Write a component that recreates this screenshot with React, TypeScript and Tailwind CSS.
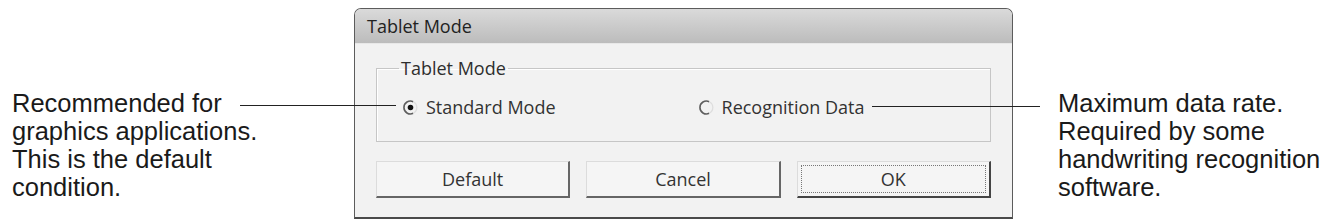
import React from "react";

const uiFont = { fontFamily: '"Open Sans", "Noto Sans", sans-serif' };

function Radio({ checked }: { checked?: boolean }) {
  return (
    <svg width="15" height="15" viewBox="0 0 14 14" className="shrink-0">
      <path d="M9.5 1.6 A6 6 0 1 0 9.5 12.4" fill="none" stroke="#5f5f5f" strokeWidth="1.5" />
      <path d="M9.5 1.6 A6 6 0 0 1 9.5 12.4" fill="none" stroke="#dedede" strokeWidth="1.2" />
      {checked && <circle cx="7" cy="7" r="2.6" fill="#111" />}
    </svg>
  );
}

function Btn({ label, focused }: { label: string; focused?: boolean }) {
  return (
    <div
      className={`flex h-[37px] w-[195px] items-center justify-center bg-[#f5f5f5] text-[18px] text-[#333] border-t border-l border-t-[#dcdcdc] border-l-[#dcdcdc] border-r-2 border-b-2 ${
        focused ? "border-r-[#444] border-b-[#444] p-[3px]" : "border-r-[#666] border-b-[#666]"
      }`}
    >
      {focused ? (
        <div className="flex h-full w-full items-center justify-center border border-dotted border-[#777]">{label}</div>
      ) : (
        label
      )}
    </div>
  );
}

export default function App() {
  return (
    <div
      className="relative flex h-[223px] w-[1329px] items-start bg-white text-[#1a1a1a]"
      style={{ fontFamily: '"Liberation Sans", Arial, sans-serif' }}
    >
      {/* left note */}
      <div className="w-[354px] shrink-0 pl-[12px] pt-[89px] text-[25.5px] leading-[28px]">
        Recommended for
        <br />
        graphics applications.
        <br />
        This is the default
        <br />
        condition.
      </div>

      {/* dialog */}
      <div
        className="mt-[8px] flex h-[211px] w-[659px] shrink-0 flex-col overflow-hidden rounded-t-[7px] border border-[#5c5c5c] border-b-2 border-b-[#4a4a4a] bg-[#f2f2f2]"
        style={uiFont}
      >
        <div className="flex h-[35px] items-center bg-gradient-to-b from-[#dadada] to-[#bcbcbc] pl-[12px] text-[18px] text-[#222] border-b border-[#e8e8e8]">
          Tablet Mode
        </div>
        <div className="flex flex-1 flex-col px-[21px] pt-[12px]">
          <fieldset className="h-[86px] border border-[#c6c6c6] px-[12px] shadow-[inset_1px_1px_0_#ffffff]">
            <legend className="ml-[10px] px-[2px] text-[18px] leading-[24px] text-[#2e2e2e]">Tablet Mode</legend>
            <div className="mt-[14px] flex items-center text-[18px] text-[#333]">
              <div className="flex items-center gap-[8px] pl-[14px]">
                <Radio checked />
                <span>Standard Mode</span>
              </div>
              <div className="ml-[143px] flex items-center gap-[8px]">
                <Radio />
                <span>Recognition Data</span>
              </div>
            </div>
          </fieldset>
          <div className="mt-[19px] flex gap-[16px]">
            <Btn label="Default" />
            <Btn label="Cancel" />
            <Btn label="OK" focused />
          </div>
        </div>
      </div>

      {/* right note */}
      <div className="shrink-0 pl-[45px] pt-[89px] text-[25.5px] leading-[28px]">
        Maximum data rate.
        <br />
        Required by some
        <br />
        handwriting recognition
        <br />
        software.
      </div>

      {/* leader lines */}
      <div className="absolute left-[240px] top-[105px] h-px w-[156px] bg-[#222]" />
      <div className="absolute left-[872px] top-[106px] h-px w-[168px] bg-[#222]" />
    </div>
  );
}
